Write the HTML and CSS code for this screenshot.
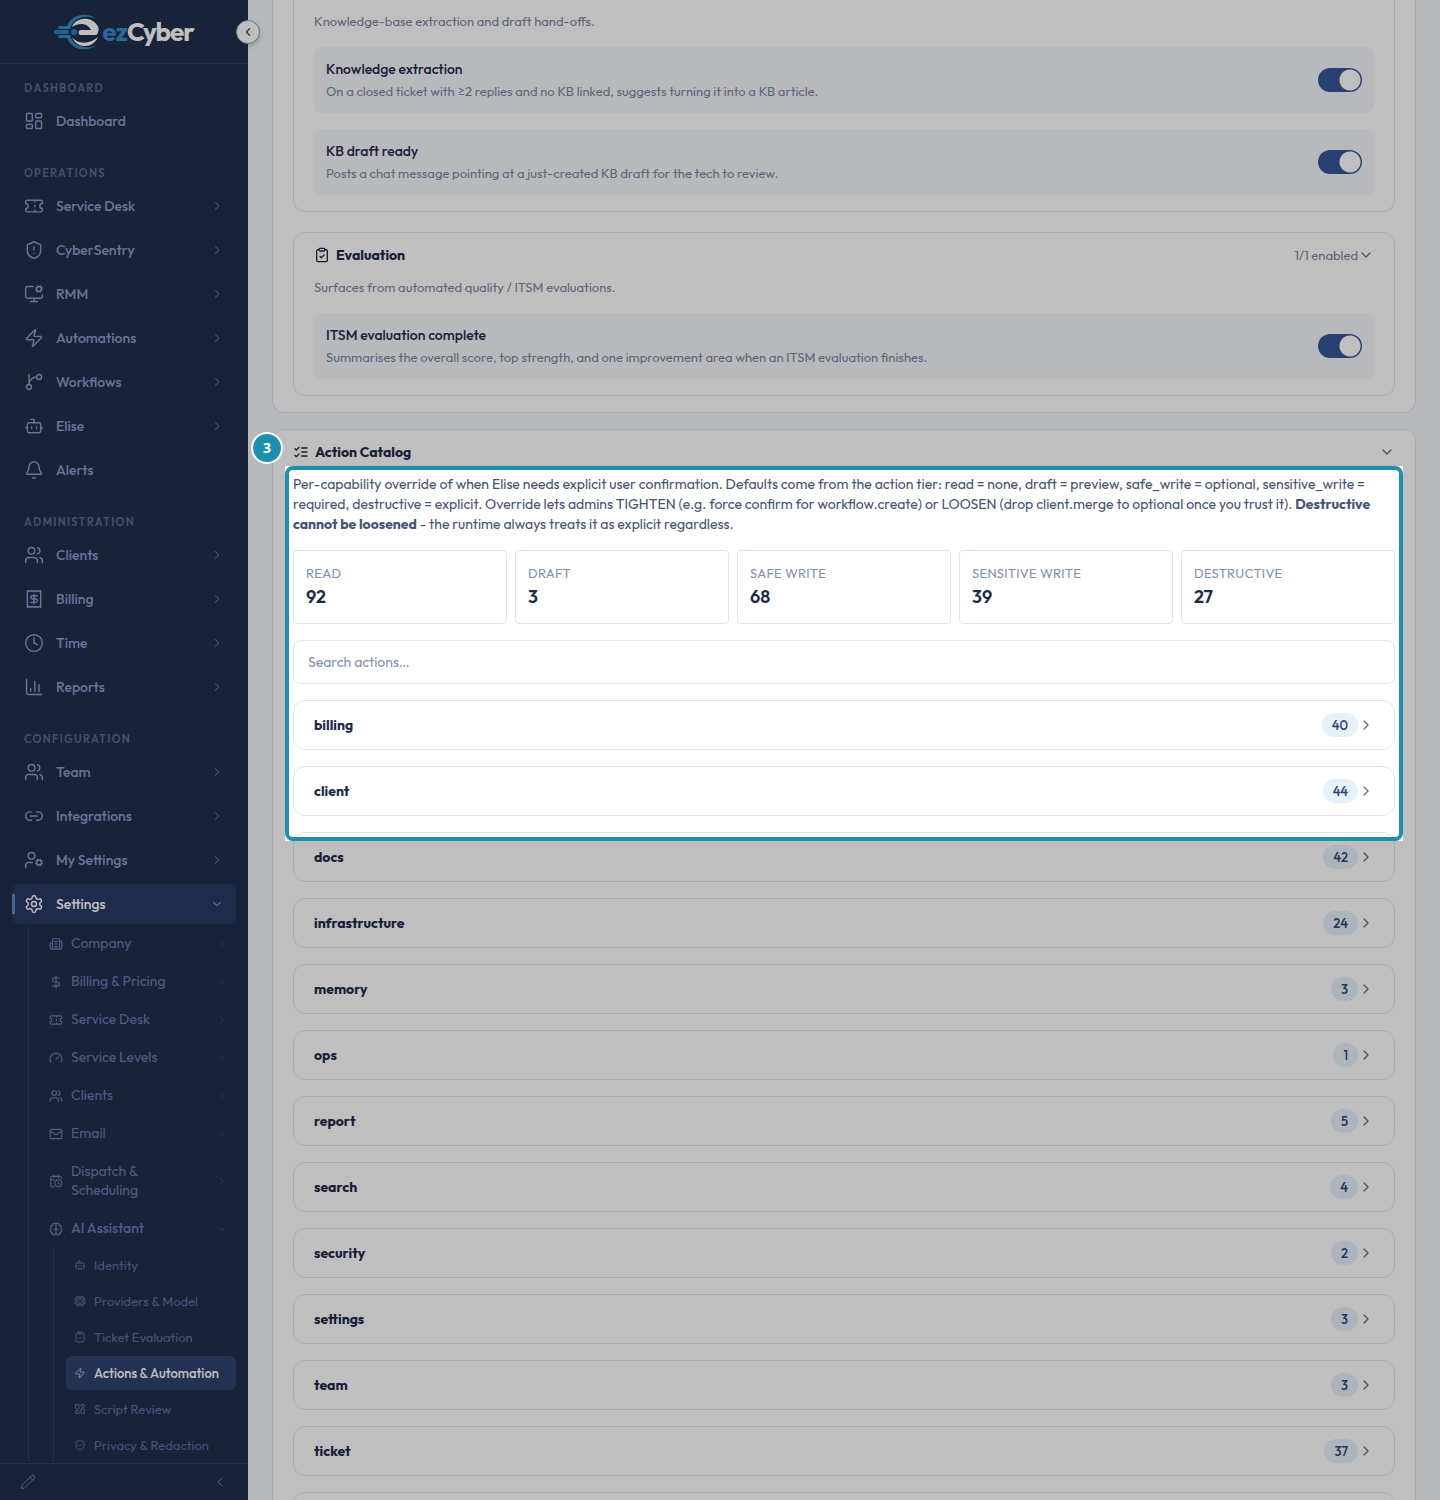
FILE: index.html
```html
<!DOCTYPE html>
<html lang="en">
<head>
<meta charset="utf-8">
<meta name="viewport" content="width=device-width, initial-scale=1">
<title>ezCyber - Actions &amp; Automation</title>
<link rel="stylesheet" href="styles.css">
</head>
<body>
<svg class="sprite" aria-hidden="true">
  <symbol id="right" viewBox="0 0 24 24"><path d="m9 18 6-6-6-6"/></symbol>
  <symbol id="left" viewBox="0 0 24 24"><path d="m15 18-6-6 6-6"/></symbol>
  <symbol id="down" viewBox="0 0 24 24"><path d="m6 9 6 6 6-6"/></symbol>
  <symbol id="dashboard" viewBox="0 0 24 24"><rect x="3" y="3" width="7" height="9" rx="1"/><rect x="14" y="3" width="7" height="5" rx="1"/><rect x="14" y="12" width="7" height="9" rx="1"/><rect x="3" y="16" width="7" height="5" rx="1"/></symbol>
  <symbol id="ticket" viewBox="0 0 24 24"><path d="M2 9a3 3 0 0 1 0 6v2a2 2 0 0 0 2 2h16a2 2 0 0 0 2-2v-2a3 3 0 0 1 0-6V7a2 2 0 0 0-2-2H4a2 2 0 0 0-2 2ZM13 5v2M13 17v2M13 11v2"/></symbol>
  <symbol id="shield-alert" viewBox="0 0 24 24"><path d="M20 13c0 5-3.500 7.500-7.660 8.950a1 1 0 0 1-.67-.01C7.500 20.500 4 18 4 13V6a1 1 0 0 1 1-1c2 0 4.500-1.200 6.240-2.720a1.170 1.170 0 0 1 1.520 0C14.510 3.810 17 5 19 5a1 1 0 0 1 1 1zM12 8v4M12 16h.01"/></symbol>
  <symbol id="shield-check" viewBox="0 0 24 24"><path d="M20 13c0 5-3.500 7.500-7.660 8.950a1 1 0 0 1-.67-.01C7.500 20.500 4 18 4 13V6a1 1 0 0 1 1-1c2 0 4.500-1.200 6.240-2.720a1.170 1.170 0 0 1 1.520 0C14.510 3.810 17 5 19 5a1 1 0 0 1 1 1zM9 12l2 2 4-4"/></symbol>
  <symbol id="monitor-cog" viewBox="0 0 24 24"><path d="M12 17v4M14.305 7.530l.923-.382M15.228 4.852l-.923-.383M16.852 3.228l-.383-.924M16.852 8.772l-.383.923M19.148 3.228l.383-.924M19.530 9.696l-.382-.924M20.772 4.852l.924-.383M20.772 7.148l.924.383M22 13v2a2 2 0 0 1-2 2H4a2 2 0 0 1-2-2V5a2 2 0 0 1 2-2h7M8 21h8"/><circle cx="18" cy="6" r="3"/></symbol>
  <symbol id="zap" viewBox="0 0 24 24"><path d="M4 14a1 1 0 0 1-.78-1.630l9.900-10.200a.5.5 0 0 1 .86.460l-1.920 6.020A1 1 0 0 0 13 10h7a1 1 0 0 1 .78 1.630l-9.900 10.200a.5.5 0 0 1-.86-.46l1.920-6.020A1 1 0 0 0 11 14z"/></symbol>
  <symbol id="branch" viewBox="0 0 24 24"><path d="M6 3v12M15 6a9 9 0 0 0-9 9"/><circle cx="18" cy="6" r="3"/><circle cx="6" cy="18" r="3"/></symbol>
  <symbol id="bot" viewBox="0 0 24 24"><path d="M12 8V4H8M2 14h2M20 14h2M15 13v2M9 13v2"/><rect x="4" y="8" width="16" height="12" rx="2"/></symbol>
  <symbol id="bell" viewBox="0 0 24 24"><path d="M10.268 21a2 2 0 0 0 3.464 0M3.262 15.326A1 1 0 0 0 4 17h16a1 1 0 0 0 .740-1.673C19.410 13.956 18 12.499 18 8A6 6 0 0 0 6 8c0 4.499-1.411 5.956-2.738 7.326"/></symbol>
  <symbol id="users" viewBox="0 0 24 24"><path d="M16 21v-2a4 4 0 0 0-4-4H6a4 4 0 0 0-4 4v2M16 3.128a4 4 0 0 1 0 7.744M22 21v-2a4 4 0 0 0-3-3.870"/><circle cx="9" cy="7" r="4"/></symbol>
  <symbol id="receipt" viewBox="0 0 24 24"><path d="M4 2v20l2-1 2 1 2-1 2 1 2-1 2 1 2-1 2 1V2l-2 1-2-1-2 1-2-1-2 1-2-1-2 1ZM16 8h-6a2 2 0 1 0 0 4h4a2 2 0 1 1 0 4H8M12 17.500v-11"/></symbol>
  <symbol id="clock" viewBox="0 0 24 24"><circle cx="12" cy="12" r="10"/><path d="M12 6v6l4 2"/></symbol>
  <symbol id="chart" viewBox="0 0 24 24"><path d="M3 3v16a2 2 0 0 0 2 2h16M18 17V9M13 17V5M8 17v-3"/></symbol>
  <symbol id="link" viewBox="0 0 24 24"><path d="M9 17H7A5 5 0 0 1 7 7h2M15 7h2a5 5 0 1 1 0 10h-2M8 12h8"/></symbol>
  <symbol id="user-cog" viewBox="0 0 24 24"><path d="M10 15H6a4 4 0 0 0-4 4v2M14.305 16.530l.923-.382M15.228 13.852l-.923-.383M16.852 12.228l-.383-.923M16.852 17.772l-.383.924M19.148 12.228l.383-.923M19.530 18.696l-.382-.924M20.772 13.852l.924-.383M20.772 16.148l.924.383"/><circle cx="18" cy="15" r="3"/><circle cx="9" cy="7" r="4"/></symbol>
  <symbol id="gear" viewBox="0 0 24 24"><path d="M12.220 2h-.44a2 2 0 0 0-2 2v.18a2 2 0 0 1-1 1.730l-.43.25a2 2 0 0 1-2 0l-.15-.08a2 2 0 0 0-2.730.730l-.22.38a2 2 0 0 0 .730 2.730l.15.1a2 2 0 0 1 1 1.720v.51a2 2 0 0 1-1 1.740l-.15.09a2 2 0 0 0-.730 2.730l.22.38a2 2 0 0 0 2.730.730l.15-.08a2 2 0 0 1 2 0l.43.25a2 2 0 0 1 1 1.730V20a2 2 0 0 0 2 2h.44a2 2 0 0 0 2-2v-.18a2 2 0 0 1 1-1.730l.43-.25a2 2 0 0 1 2 0l.15.08a2 2 0 0 0 2.730-.730l.22-.39a2 2 0 0 0-.730-2.730l-.15-.08a2 2 0 0 1-1-1.740v-.5a2 2 0 0 1 1-1.740l.15-.09a2 2 0 0 0 .730-2.730l-.22-.38a2 2 0 0 0-2.730-.730l-.15.08a2 2 0 0 1-2 0l-.43-.25a2 2 0 0 1-1-1.730V4a2 2 0 0 0-2-2z"/><circle cx="12" cy="12" r="3"/></symbol>
  <symbol id="building" viewBox="0 0 24 24"><path d="M10 12h4M10 8h4M14 21v-3a2 2 0 0 0-4 0v3M6 10H4a2 2 0 0 0-2 2v7a2 2 0 0 0 2 2h16a2 2 0 0 0 2-2V9a2 2 0 0 0-2-2h-2M6 21V5a2 2 0 0 1 2-2h8a2 2 0 0 1 2 2v16"/></symbol>
  <symbol id="dollar" viewBox="0 0 24 24"><path d="M12 2v20M17 5H9.500a3.500 3.500 0 0 0 0 7h5a3.500 3.500 0 0 1 0 7H6"/></symbol>
  <symbol id="gauge" viewBox="0 0 24 24"><path d="m12 14 4-4M3.340 19a10 10 0 1 1 17.320 0"/></symbol>
  <symbol id="mail" viewBox="0 0 24 24"><rect x="2" y="4" width="20" height="16" rx="2"/><path d="m22 7-8.970 5.700a1.940 1.940 0 0 1-2.060 0L2 7"/></symbol>
  <symbol id="calendar" viewBox="0 0 24 24"><path d="M16 14v2.200l1.600 1M16 2v4M21 7.500V6a2 2 0 0 0-2-2H5a2 2 0 0 0-2 2v14a2 2 0 0 0 2 2h3.500M3 10h5M8 2v4"/><circle cx="16" cy="16" r="6"/></symbol>
  <symbol id="brain" viewBox="0 0 24 24"><path d="M12 18V5M15 13a4.170 4.170 0 0 1-3-4 4.170 4.170 0 0 1-3 4M17.598 6.500A3 3 0 1 0 12 5a3 3 0 1 0-5.598 1.500M17.997 5.125a4 4 0 0 1 2.526 5.770M18 18a4 4 0 0 0 2-7.464M19.967 17.483A4 4 0 1 1 12 18a4 4 0 1 1-7.967-.517M6 18a4 4 0 0 1-2-7.464M6.003 5.125a4 4 0 0 0-2.526 5.770"/></symbol>
  <symbol id="cpu" viewBox="0 0 24 24"><rect x="4" y="4" width="16" height="16" rx="2"/><rect x="8" y="8" width="8" height="8" rx="1"/><path d="M12 20v2M12 2v2M17 20v2M17 2v2M2 12h2M2 17h2M2 7h2M20 12h2M20 17h2M20 7h2M7 20v2M7 2v2"/></symbol>
  <symbol id="clipboard" viewBox="0 0 24 24"><rect x="8" y="2" width="8" height="4" rx="1"/><path d="M16 4h2a2 2 0 0 1 2 2v14a2 2 0 0 1-2 2H6a2 2 0 0 1-2-2V6a2 2 0 0 1 2-2h2M9 14l2 2 4-4"/></symbol>
  <symbol id="checks" viewBox="0 0 24 24"><path d="m3 17 2 2 4-4M3 7l2 2 4-4M13 6h8M13 12h8M13 18h8"/></symbol>
  <symbol id="pencil" viewBox="0 0 24 24"><path d="M21.174 6.812a1 1 0 0 0-3.986-3.987L3.842 16.174a2 2 0 0 0-.5.830l-1.321 4.352a.5.5 0 0 0 .623.622l4.353-1.320a2 2 0 0 0 .830-.497zM15 5l4 4"/></symbol>
</svg>

<div class="shell">
  <aside class="sidebar">
    <header class="brand">
      <a class="logo" href="#" aria-label="ezCyber">
        <svg class="logo-mark" viewBox="0 0 46 36" aria-hidden="true">
          <path d="M43 5C34-2 18-1 13 12H5a2 2 0 0 0 0 3h11C19 3 33 0 43 5Z" fill="#2f8ac0"/>
          <path d="M43 31C34 38 18 37 13 24H5a2 2 0 0 1 0-3h11C19 33 33 36 43 31Z" fill="#2f8ac0"/>
          <path d="M2 18h11" stroke="#2f7fc0" stroke-width="4" stroke-linecap="round"/>
          <circle cx="20" cy="18" r="3" fill="#2f7fc0"/>
          <path d="M18 13C22 3 37 2 43 11c2 3 2 5 1 7a3 3 0 0 1-3 3H27a2 2 0 0 1 0-5h10C34 9 25 8 18 13Z" fill="#fff"/>
          <path d="M18 23c5 7 17 8 26 0-4 11-21 13-26 0Z" fill="#fff"/>
        </svg>
        <span class="logo-text"><span class="logo-ez">ez</span>Cyber</span>
      </a>
      <button class="collapse" type="button" aria-label="Collapse sidebar"><svg class="icon icon-14"><use href="#left"/></svg></button>
    </header>

    <nav class="nav" aria-label="Main">
      <section class="group">
        <h2 class="group-label">Dashboard</h2>
        <ul class="list">
          <li><a class="item" href="#"><svg class="icon icon-20"><use href="#dashboard"/></svg><span class="name">Dashboard</span></a></li>
        </ul>
      </section>
      <section class="group">
        <h2 class="group-label">Operations</h2>
        <ul class="list">
          <li><a class="item" href="#"><svg class="icon icon-20"><use href="#ticket"/></svg><span class="name">Service Desk</span><svg class="icon icon-14"><use href="#right"/></svg></a></li>
          <li><a class="item" href="#"><svg class="icon icon-20"><use href="#shield-alert"/></svg><span class="name">CyberSentry</span><svg class="icon icon-14"><use href="#right"/></svg></a></li>
          <li><a class="item" href="#"><svg class="icon icon-20"><use href="#monitor-cog"/></svg><span class="name">RMM</span><svg class="icon icon-14"><use href="#right"/></svg></a></li>
          <li><a class="item" href="#"><svg class="icon icon-20"><use href="#zap"/></svg><span class="name">Automations</span><svg class="icon icon-14"><use href="#right"/></svg></a></li>
          <li><a class="item" href="#"><svg class="icon icon-20"><use href="#branch"/></svg><span class="name">Workflows</span><svg class="icon icon-14"><use href="#right"/></svg></a></li>
          <li><a class="item" href="#"><svg class="icon icon-20"><use href="#bot"/></svg><span class="name">Elise</span><svg class="icon icon-14"><use href="#right"/></svg></a></li>
          <li><a class="item" href="#"><svg class="icon icon-20"><use href="#bell"/></svg><span class="name">Alerts</span></a></li>
        </ul>
      </section>
      <section class="group">
        <h2 class="group-label">Administration</h2>
        <ul class="list">
          <li><a class="item" href="#"><svg class="icon icon-20"><use href="#users"/></svg><span class="name">Clients</span><svg class="icon icon-14"><use href="#right"/></svg></a></li>
          <li><a class="item" href="#"><svg class="icon icon-20"><use href="#receipt"/></svg><span class="name">Billing</span><svg class="icon icon-14"><use href="#right"/></svg></a></li>
          <li><a class="item" href="#"><svg class="icon icon-20"><use href="#clock"/></svg><span class="name">Time</span><svg class="icon icon-14"><use href="#right"/></svg></a></li>
          <li><a class="item" href="#"><svg class="icon icon-20"><use href="#chart"/></svg><span class="name">Reports</span><svg class="icon icon-14"><use href="#right"/></svg></a></li>
        </ul>
      </section>
      <section class="group">
        <h2 class="group-label">Configuration</h2>
        <ul class="list">
          <li><a class="item" href="#"><svg class="icon icon-20"><use href="#users"/></svg><span class="name">Team</span><svg class="icon icon-14"><use href="#right"/></svg></a></li>
          <li><a class="item" href="#"><svg class="icon icon-20"><use href="#link"/></svg><span class="name">Integrations</span><svg class="icon icon-14"><use href="#right"/></svg></a></li>
          <li><a class="item" href="#"><svg class="icon icon-20"><use href="#user-cog"/></svg><span class="name">My Settings</span><svg class="icon icon-14"><use href="#right"/></svg></a></li>
          <li>
            <a class="item item-open" href="#"><svg class="icon icon-20"><use href="#gear"/></svg><span class="name">Settings</span><svg class="icon icon-14"><use href="#down"/></svg></a>
            <ul class="sub">
              <li><a class="sub-item" href="#"><svg class="icon icon-14"><use href="#building"/></svg><span class="name">Company</span><svg class="icon icon-12"><use href="#right"/></svg></a></li>
              <li><a class="sub-item" href="#"><svg class="icon icon-14"><use href="#dollar"/></svg><span class="name">Billing &amp; Pricing</span><svg class="icon icon-12"><use href="#right"/></svg></a></li>
              <li><a class="sub-item" href="#"><svg class="icon icon-14"><use href="#ticket"/></svg><span class="name">Service Desk</span><svg class="icon icon-12"><use href="#right"/></svg></a></li>
              <li><a class="sub-item" href="#"><svg class="icon icon-14"><use href="#gauge"/></svg><span class="name">Service Levels</span><svg class="icon icon-12"><use href="#right"/></svg></a></li>
              <li><a class="sub-item" href="#"><svg class="icon icon-14"><use href="#users"/></svg><span class="name">Clients</span><svg class="icon icon-12"><use href="#right"/></svg></a></li>
              <li><a class="sub-item" href="#"><svg class="icon icon-14"><use href="#mail"/></svg><span class="name">Email</span><svg class="icon icon-12"><use href="#right"/></svg></a></li>
              <li><a class="sub-item" href="#"><svg class="icon icon-14"><use href="#calendar"/></svg><span class="name">Dispatch &amp;<br>Scheduling</span><svg class="icon icon-12"><use href="#right"/></svg></a></li>
              <li>
                <a class="sub-item sub-open" href="#"><svg class="icon icon-14"><use href="#brain"/></svg><span class="name">AI Assistant</span><svg class="icon icon-12"><use href="#down"/></svg></a>
                <ul class="leaves">
                  <li><a class="leaf" href="#"><svg class="icon icon-12"><use href="#bot"/></svg>Identity</a></li>
                  <li><a class="leaf" href="#"><svg class="icon icon-12"><use href="#cpu"/></svg>Providers &amp; Model</a></li>
                  <li><a class="leaf" href="#"><svg class="icon icon-12"><use href="#clipboard"/></svg>Ticket Evaluation</a></li>
                  <li><a class="leaf leaf-active" href="#" aria-current="page"><svg class="icon icon-12"><use href="#zap"/></svg>Actions &amp; Automation</a></li>
                  <li><a class="leaf" href="#"><svg class="icon icon-12"><use href="#dashboard"/></svg>Script Review</a></li>
                  <li><a class="leaf" href="#"><svg class="icon icon-12"><use href="#shield-check"/></svg>Privacy &amp; Redaction</a></li>
                </ul>
              </li>
            </ul>
          </li>
        </ul>
      </section>
    </nav>

    <footer class="side-foot">
      <button class="plain" type="button" aria-label="Edit menu"><svg class="icon icon-16"><use href="#pencil"/></svg></button>
      <button class="plain" type="button" aria-label="Collapse menu"><svg class="icon icon-16"><use href="#left"/></svg></button>
    </footer>
  </aside>

  <main class="main">
    <section class="card card-continued">
      <section class="panel panel-continued">
        <p class="hint">Knowledge-base extraction and draft hand-offs.</p>
        <div class="settings">
          <label class="setting">
            <span class="setting-text"><span class="setting-name">Knowledge extraction</span><span class="setting-hint">On a closed ticket with ≥2 replies and no KB linked, suggests turning it into a KB article.</span></span>
            <input class="toggle" type="checkbox" checked>
          </label>
          <label class="setting">
            <span class="setting-text"><span class="setting-name">KB draft ready</span><span class="setting-hint">Posts a chat message pointing at a just-created KB draft for the tech to review.</span></span>
            <input class="toggle" type="checkbox" checked>
          </label>
        </div>
      </section>
      <section class="panel">
        <button class="panel-head" type="button">
          <svg class="icon icon-16 icon-strong"><use href="#clipboard"/></svg>
          <span class="title">Evaluation</span>
          <span class="enabled">1/1 enabled</span>
          <svg class="icon icon-16 chevron"><use href="#down"/></svg>
        </button>
        <p class="hint">Surfaces from automated quality / ITSM evaluations.</p>
        <div class="settings">
          <label class="setting">
            <span class="setting-text"><span class="setting-name">ITSM evaluation complete</span><span class="setting-hint">Summarises the overall score, top strength, and one improvement area when an ITSM evaluation finishes.</span></span>
            <input class="toggle" type="checkbox" checked>
          </label>
        </div>
      </section>
    </section>

    <section class="card">
      <button class="card-head" type="button">
        <svg class="icon icon-16 icon-strong"><use href="#checks"/></svg>
        <span class="title">Action Catalog</span>
        <svg class="icon icon-16 chevron"><use href="#down"/></svg>
      </button>
      <div class="catalog">
        <p class="intro">Per-capability override of when Elise needs explicit user confirmation. Defaults come from the action tier: read = none, draft = preview, safe_write = optional, sensitive_write = required, destructive = explicit. Override lets admins TIGHTEN (e.g. force confirm for workflow.create) or LOOSEN (drop client.merge to optional once you trust it). <strong>Destructive cannot be loosened</strong> - the runtime always treats it as explicit regardless.</p>
        <dl class="stats">
          <div class="stat"><dt>Read</dt><dd>92</dd></div>
          <div class="stat"><dt>Draft</dt><dd>3</dd></div>
          <div class="stat"><dt>Safe write</dt><dd>68</dd></div>
          <div class="stat"><dt>Sensitive write</dt><dd>39</dd></div>
          <div class="stat"><dt>Destructive</dt><dd>27</dd></div>
        </dl>
        <input class="search" type="search" placeholder="Search actions…" aria-label="Search actions">
        <button class="row" type="button"><span class="title">billing</span><span class="count">40</span><svg class="icon icon-16 chevron"><use href="#right"/></svg></button>
        <button class="row" type="button"><span class="title">client</span><span class="count">44</span><svg class="icon icon-16 chevron"><use href="#right"/></svg></button>
        <button class="row" type="button"><span class="title">docs</span><span class="count">42</span><svg class="icon icon-16 chevron"><use href="#right"/></svg></button>
        <button class="row" type="button"><span class="title">infrastructure</span><span class="count">24</span><svg class="icon icon-16 chevron"><use href="#right"/></svg></button>
        <button class="row" type="button"><span class="title">memory</span><span class="count">3</span><svg class="icon icon-16 chevron"><use href="#right"/></svg></button>
        <button class="row" type="button"><span class="title">ops</span><span class="count">1</span><svg class="icon icon-16 chevron"><use href="#right"/></svg></button>
        <button class="row" type="button"><span class="title">report</span><span class="count">5</span><svg class="icon icon-16 chevron"><use href="#right"/></svg></button>
        <button class="row" type="button"><span class="title">search</span><span class="count">4</span><svg class="icon icon-16 chevron"><use href="#right"/></svg></button>
        <button class="row" type="button"><span class="title">security</span><span class="count">2</span><svg class="icon icon-16 chevron"><use href="#right"/></svg></button>
        <button class="row" type="button"><span class="title">settings</span><span class="count">3</span><svg class="icon icon-16 chevron"><use href="#right"/></svg></button>
        <button class="row" type="button"><span class="title">team</span><span class="count">3</span><svg class="icon icon-16 chevron"><use href="#right"/></svg></button>
        <button class="row" type="button"><span class="title">ticket</span><span class="count">37</span><svg class="icon icon-16 chevron"><use href="#right"/></svg></button>
        <button class="row" type="button" aria-label="More actions"></button>
        <div class="spotlight"><div class="spotlight-ring"></div><span class="step">3</span></div>
      </div>
    </section>
  </main>
</div>
</body>
</html>
```
FILE: styles.css
```css
*, *::before, *::after { box-sizing: border-box; }

body {
  margin: 0;
  background: #f5f7fd;
  color: #1e2a4a;
  font-family: Outfit, Lato, "Liberation Sans", sans-serif;
  font-size: 14px;
  line-height: 20px;
}

h2, p, ul, dl, dd { margin: 0; padding: 0; }
ul { list-style: none; }
a { color: inherit; text-decoration: none; }
button, input { font: inherit; color: inherit; margin: 0; }
button { cursor: pointer; background: none; border: 0; padding: 0; text-align: left; }

.sprite { display: none; }

.icon {
  flex: none;
  fill: none;
  stroke: currentColor;
  stroke-width: 2;
  stroke-linecap: round;
  stroke-linejoin: round;
}
.icon-12 { width: 12px; height: 12px; }
.icon-14 { width: 14px; height: 14px; }
.icon-16 { width: 16px; height: 16px; }
.icon-20 { width: 20px; height: 20px; stroke-width: 1.7; }

.shell {
  display: flex;
  height: 100vh;
  overflow: hidden;
}

/* Sidebar */
.sidebar {
  display: flex;
  flex: none;
  flex-direction: column;
  width: 248px;
  background: #212e4d;
  color: #8b9dcb;
}

.brand {
  position: relative;
  display: flex;
  flex: none;
  align-items: center;
  justify-content: center;
  height: 64px;
  border-bottom: 1px solid #34405f;
}
.logo { display: flex; align-items: center; gap: 2px; }
.logo-mark { width: 46px; height: 36px; }
.logo-text {
  color: #fff;
  font-size: 26px;
  font-weight: 700;
  line-height: 32px;
  letter-spacing: -1px;
}
.logo-ez { color: #3a88c8; }

.collapse {
  position: absolute;
  top: 20px;
  right: -12px;
  z-index: 1;
  display: flex;
  align-items: center;
  justify-content: center;
  width: 24px;
  height: 24px;
  border: 1px solid #8d98b8;
  border-radius: 50%;
  background: #fff;
  color: #3a4666;
  box-shadow: 0 2px 4px #1e2a4a40;
}

.nav {
  display: flex;
  flex: 1;
  flex-direction: column;
  gap: 24px;
  min-height: 0;
  padding: 16px 12px 0;
  overflow: hidden;
}
.group-label {
  margin-bottom: 4px;
  padding-left: 12px;
  color: #60688c;
  font-size: 11px;
  font-weight: 600;
  line-height: 17px;
  letter-spacing: 0.12em;
  text-transform: uppercase;
}
.list { display: flex; flex-direction: column; gap: 4px; }
.item {
  display: flex;
  align-items: center;
  gap: 12px;
  height: 40px;
  padding: 0 12px;
  border-radius: 8px;
  font-weight: 500;
}
.item .icon-14 { color: #7484ae; stroke-width: 1.7; }
.name { flex: 1; }
.item-open {
  background: linear-gradient(90deg, #5f8cc0 3px, transparent 3px) 0 50% / 100% 20px no-repeat, #283a63;
  color: #fff;
}
.item-open .icon-14 { color: #b4c0de; }

.sub {
  display: flex;
  flex-direction: column;
  gap: 3px;
  margin: 2px 0 0 16px;
  padding-left: 12px;
  border-left: 1px solid #34405f;
}
.sub-item {
  display: flex;
  align-items: center;
  gap: 8px;
  padding: 8px;
  color: #697db0;
  line-height: 19px;
}
.sub-item .icon-12 { color: #3a4c78; }
.sub-open { font-weight: 500; }

.leaves {
  display: flex;
  flex-direction: column;
  gap: 2px;
  margin: 2px 0 0 12px;
  padding-left: 12px;
  border-left: 1px solid #34405f;
}
.leaf {
  display: flex;
  align-items: center;
  gap: 8px;
  height: 34px;
  padding: 0 8px;
  border-radius: 6px;
  color: #5d70a3;
  font-size: 13px;
  white-space: nowrap;
}
.leaf-active { background: #2f426f; color: #fff; font-weight: 500; }
.leaf-active .icon { color: #a9b6d6; }

.side-foot {
  display: flex;
  flex: none;
  align-items: center;
  justify-content: space-between;
  height: 37px;
  padding: 0 20px;
  border-top: 1px solid #34405f;
}
.plain { display: flex; color: #7382a8; }
.plain .icon { stroke-width: 1.5; }

/* Content */
.main {
  display: flex;
  flex: 1;
  flex-direction: column;
  gap: 16px;
  min-width: 0;
  padding: 0 24px;
}
.card {
  flex: none;
  padding: 12px 20px 16px;
  border: 1px solid #dfe4f0;
  border-radius: 12px;
  background: #fff;
}
.card-continued {
  display: flex;
  flex-direction: column;
  gap: 20px;
  padding-top: 0;
  border-top: 0;
  border-radius: 0 0 12px 12px;
}
.panel {
  padding: 12px 20px 16px;
  border: 1px solid #dfe4f0;
  border-radius: 12px;
}
.panel-continued { padding-top: 11px; border-top: 0; border-radius: 0 0 12px 12px; }

.panel-head, .card-head {
  display: flex;
  align-items: center;
  width: 100%;
  margin-bottom: 12px;
  line-height: 20px;
}
.title { flex: 1; font-weight: 700; }
.icon-strong { margin-right: 6px; }
.chevron { color: #64708f; }
.enabled { color: #7c879f; font-size: 13px; }
.hint { margin-bottom: 16px; color: #7c879f; font-size: 13px; }

.settings { display: flex; flex-direction: column; gap: 16px; }
.setting {
  display: flex;
  align-items: center;
  justify-content: space-between;
  gap: 16px;
  min-height: 66px;
  padding: 12px;
  border-radius: 8px;
  background: #f5f7fd;
}
.setting-text { display: flex; flex-direction: column; gap: 2px; }
.setting-name { font-weight: 500; }
.setting-hint { color: #7c879f; font-size: 13px; }

.toggle {
  flex: none;
  width: 44px;
  height: 24px;
  appearance: none;
  border-radius: 12px;
  background: radial-gradient(circle at 32px 12px, #fff 10px, transparent 11px), #375799;
}

.catalog {
  position: relative;
  display: flex;
  flex-direction: column;
  gap: 16px;
}
.intro { color: #475372; }
.stats {
  display: grid;
  grid-template-columns: repeat(5, 1fr);
  gap: 8px;
}
.stat {
  height: 74px;
  padding: 12px;
  border: 1px solid #dfe4f0;
  border-radius: 4px;
}
.stat dt {
  color: #8492a8;
  font-size: 13px;
  letter-spacing: 0.02em;
  text-transform: uppercase;
}
.stat dd {
  font-size: 18px;
  font-weight: 600;
  line-height: 28px;
}
.search {
  width: 100%;
  height: 44px;
  padding: 0 14px;
  appearance: none;
  border: 1px solid #dfe8f4;
  border-radius: 8px;
  background: #fff;
}
.search::placeholder { color: #8492a8; opacity: 1; }

.row {
  display: flex;
  align-items: center;
  height: 50px;
  padding: 0 20px;
  border: 1px solid #dfe4f0;
  border-radius: 12px;
}
.count {
  padding: 0 10px;
  border-radius: 12px;
  background: #e6f2fa;
  color: #2c4373;
  font-size: 13px;
  font-weight: 500;
  line-height: 24px;
}

/* Guided tour: everything outside the spotlight is dimmed */
.spotlight {
  position: absolute;
  top: -8px;
  right: -8px;
  left: -8px;
  z-index: 10;
  height: 375px;
  box-shadow: 0 0 0 3000px rgba(0, 0, 0, 0.25);
  pointer-events: none;
}
.spotlight-ring {
  height: 100%;
  border: 4px solid #208fad;
  border-radius: 8px;
}
.step {
  position: absolute;
  top: -34px;
  left: -34px;
  width: 32px;
  height: 32px;
  border: 2px solid #fff;
  border-radius: 50%;
  background: #208fad;
  color: #fff;
  font-family: "Noto Sans", sans-serif;
  font-size: 14px;
  font-weight: 700;
  line-height: 28px;
  text-align: center;
}
```
